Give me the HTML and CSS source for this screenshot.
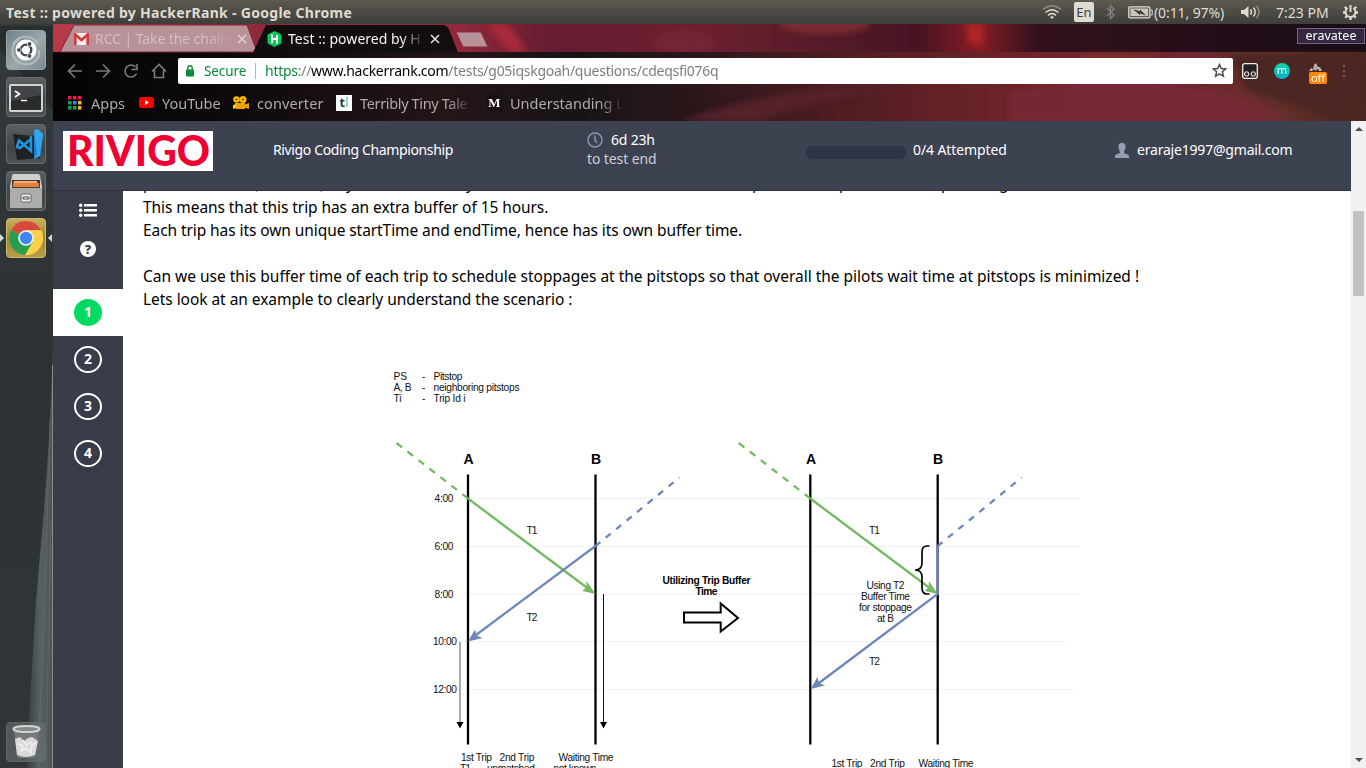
FILE: index.html
```html
<!DOCTYPE html>
<html lang="en">
<head>
<meta charset="utf-8">
<title>Test :: powered by HackerRank</title>
<link rel="stylesheet" href="styles.css">
</head>
<body>
<header class="panel">
  <span class="panel-title">Test :: powered by HackerRank - Google Chrome</span>
  <div class="indicators">
    <svg class="ind-wifi" width="20" height="16" viewBox="0 0 20 16" fill="none" stroke="#dfdbd2" stroke-width="1.5"><path d="M1 5.5Q10-2 19 5.5" stroke="#8d8b84"/><path d="M3.5 8.5Q10 3 16.500 8.500"/><path d="M6 11.300Q10 8 14 11.300"/><path d="M8 13l2 2 2-2q-2-1.500-4 0z" fill="#dfdbd2" stroke="none"/></svg>
    <span class="lang">En</span>
    <svg class="ind-bt" width="10" height="16" viewBox="0 0 10 16" fill="none" stroke="#85837c" stroke-width="1.300"><path d="M1 4l7 7-3.500 3.500V1.500L8 5l-7 7"/></svg>
    <svg class="ind-bat" width="25" height="13" viewBox="0 0 25 13"><rect x=".8" y=".8" width="21" height="11" rx="1" fill="#5d5b54" stroke="#dfdbd2" stroke-width="1.300"/><rect x="2.500" y="2.500" width="17.500" height="7.500" fill="#c8c5bd"/><path d="M22.500 4h1.700v5h-1.700" fill="none" stroke="#dfdbd2"/><path d="M5 3.500l7 1.500v-1.500l6 6-6-2v1.500z" fill="#3c3b37"/></svg>
    <span class="bat-text">(0:11, 97%)</span>
    <svg class="ind-vol" width="20" height="14" viewBox="0 0 20 14" fill="none" stroke="#dfdbd2" stroke-width="1.500"><path d="M0 5h3l4.500-4v12L3 9H0z" fill="#dfdbd2" stroke="none"/><path d="M9.500 4.500q2 2.500 0 5M12.500 2.500q3.500 4.500 0 9"/><path d="M15.500.8q5 6.200 0 12.400" stroke="#8d8b84"/></svg>
    <span class="clock">7:23 PM</span>
    <svg width="17" height="17" viewBox="0 0 17 17" fill="none" stroke="#dfdbd2"><path d="M5.500 4a5 5 0 1 0 6 0" stroke-width="2"/><path d="M8.500 1v7" stroke-width="2"/><path d="M1 8.500h2M14 8.500h2M2.800 2.800l1.700 1.700M14.200 2.800l-1.700 1.700M3.200 13.800l1.500-1.500M13.800 13.800l-1.500-1.500M8.500 13.500V16" stroke-width="2.300"/></svg>
  </div>
</header>
<div class="desktop">
  <nav class="launcher">
    <svg class="launcher-bg" width="53" height="744" viewBox="0 24 53 744"><defs><linearGradient id="beam" x1="0" x2="1"><stop offset="0" stop-color="#343c3f"/><stop offset=".5" stop-color="#566063"/><stop offset="1" stop-color="#4c5558"/></linearGradient></defs><path d="M0 50L53 110V26H0z" fill="#1d2122" opacity=".5"/><path d="M53 350L49 440L44 510L36 600L26 768H53z" fill="url(#beam)"/><path d="M50 420L46 560L38 768M51 520L46 768" fill="none" stroke="#6e787a" opacity=".45"/><path d="M52.500 365V768" stroke="#8c8b82"/></svg>
    <div class="tile tile-dash"><svg width="40" height="40" viewBox="0 0 40 40"><path d="M7 17C8 7 22 2 32 13M33 20c2 11-10 18-20 12M13 33C3 25 5 14 14 8" fill="none" stroke="#b1bcc0" stroke-width="2"/><circle cx="20" cy="20" r="10.500" fill="#fff"/><circle cx="20" cy="20" r="5.300" fill="none" stroke="#3b454a" stroke-width="2.300"/><g fill="#3b454a" stroke="#fff" stroke-width=".8"><circle cx="13" cy="20" r="2.300"/><circle cx="23.500" cy="14" r="2.300"/><circle cx="23.500" cy="26" r="2.300"/></g></svg></div>
    <div class="tile"><svg width="40" height="40" viewBox="0 0 40 40"><rect x="3" y="7" width="34" height="28" rx="2" fill="#d2d2cf"/><rect x="5" y="9" width="30" height="24" fill="#292a2c"/><path d="M5 9h30v9L5 24z" fill="#424447"/><path d="M9 14l4.500 3L9 20M15 23.500h6" fill="none" stroke="#fff" stroke-width="1.600"/></svg></div>
    <div class="tile"><svg width="40" height="40" viewBox="0 0 40 40"><path d="M7 10l21 2 6 22-23 2z" fill="#202122"/><path d="M28 6l9 5-3 21-6 3z" fill="#1783cf"/><path d="M28 6l4-1 5 5-3 22-6 3 3-5z" fill="#32a5ed"/><path d="M25 12v15L13 16.500 11 23l3 1 11-9" fill="none" stroke="#2196df" stroke-width="2.500"/></svg></div>
    <div class="tile"><svg width="40" height="40" viewBox="0 0 40 40"><path d="M6 5q0-2 2-2h24q2 0 2 2l2 11v19q0 2-2 2H6q-2 0-2-2V16z" fill="#cfcfcd"/><path d="M6 9h28v8H6z" fill="#4f3b2c"/><path d="M8 10h23v2H8z" fill="#f3b27d"/><path d="M7 12h26v4H7z" fill="#e1813d"/><path d="M4 17h32v18q0 2-2 2H6q-2 0-2-2z" fill="#adadac"/><rect x="15" y="23" width="10" height="8" rx="1.500" fill="#e9e9e7" stroke="#666"/><path d="M17 28v-2h6v2z" fill="none" stroke="#555"/></svg></div>
    <div class="tile tile-chrome"><svg width="40" height="40" viewBox="0 0 40 40"><circle cx="20" cy="20" r="17" fill="#f9c440"/><path d="M20 20L5 12A17 17 0 0 1 35 12z" fill="#d6493f"/><path d="M20 20L5 12A17 17 0 0 0 19 37L27 24z" fill="#2a9c50"/><path d="M20 12h15a17 17 0 0 1-16 25l8-13z" fill="#fcd04b"/><circle cx="20" cy="20" r="7.800" fill="#f4f4f2"/><circle cx="20" cy="20" r="6.200" fill="#4286f5"/></svg></div>
    <div class="tile tile-trash"><svg width="40" height="40" viewBox="0 0 40 40"><path d="M8 10l3 24q0 2 3 2h13q2 0 3-2l3-24z" fill="#737a7c"/><path d="M9 17l5-2 4 4 4-3 4-1 6 4-3 14q-9 4-18 0z" fill="#d9dad9"/><path d="M12 22l5 2-2 5 5-3 5 5 1-8 4-2M17 18l3 5 6-3" fill="none" stroke="#f0f0ef" stroke-width="1.500"/><ellipse cx="20.500" cy="7" rx="13" ry="3" fill="#81888a" stroke="#d4d3cf" stroke-width="2"/></svg></div>
  </nav>
  <div class="browser">
    <div class="chrome">
      <svg class="theme" width="1313" height="97" viewBox="53 24 1313 97" preserveAspectRatio="none">
        <defs>
          <linearGradient id="strip" gradientUnits="userSpaceOnUse" x1="53" x2="1366" y1="0" y2="0"><stop offset="0" stop-color="#b83a47"/><stop offset=".15" stop-color="#8f2a3d"/><stop offset=".31" stop-color="#90283a"/><stop offset=".38" stop-color="#651d31"/><stop offset=".49" stop-color="#6d2030"/><stop offset=".57" stop-color="#5a1c2a"/><stop offset=".66" stop-color="#471423"/><stop offset=".706" stop-color="#8a1c25"/><stop offset=".72" stop-color="#681a22"/><stop offset=".75" stop-color="#31101c"/><stop offset="1" stop-color="#180d16"/></linearGradient>
          <linearGradient id="bar" gradientUnits="userSpaceOnUse" x1="53" x2="1366" y1="0" y2="0"><stop offset="0" stop-color="#040304"/><stop offset=".14" stop-color="#0e0a0b"/><stop offset=".3" stop-color="#241517"/><stop offset=".4" stop-color="#171416"/><stop offset=".49" stop-color="#2b171a"/><stop offset=".6" stop-color="#501d22"/><stop offset=".72" stop-color="#6c2428"/><stop offset=".85" stop-color="#702530"/><stop offset=".93" stop-color="#66302b"/><stop offset="1" stop-color="#492820"/></linearGradient>
          <filter id="soft" x="-20%" y="-50%" width="140%" height="200%"><feGaussianBlur stdDeviation="3"/></filter>
        </defs>
        <path d="M53 24H1366V52H53z" fill="url(#strip)"/>
        <g filter="url(#soft)"><path d="M486 24h22l20 28h-18z" fill="#b72a3b" opacity=".8"/><ellipse cx="825" cy="24" rx="45" ry="10" fill="#883333" opacity=".7"/><ellipse cx="684" cy="42" rx="30" ry="12" fill="#7c2935" opacity=".6"/><path d="M965 24h18v20h-14z" fill="#c42928" opacity=".7"/></g>
        <path d="M53 52H1366V121H53z" fill="url(#bar)"/>
        <g filter="url(#soft)"><path d="M680 121Q770 90 860 86L900 90Q820 98 760 121z" fill="#54212a"/><path d="M1010 92Q1130 70 1245 98L1290 121H1010z" fill="#7c2b36" opacity=".7"/><path d="M1228 54L1246 90L1340 121L1366 90V54z" fill="#4b2820"/><path d="M1080 54h80l-20 12h-60z" fill="#87322a" opacity=".7"/></g>
        <path d="M60 52L74 25H247L257 52z" fill="#b79299" stroke="#7c2634"/>
        <path d="M253 52.500L266 25H442Q448 25 450 32L458 52.500z" fill="#120d0f"/>
        <path d="M456 32H481L488 47H463z" fill="#b79299" stroke="#862c3b"/>
      </svg>
      <div class="tabs">
        <div class="tab tab-mail">
          <svg width="15" height="12" viewBox="0 0 15 12"><path d="M0 0h15v12H0z" fill="#f3eded"/><path d="M1.300 12V1.500L7.500 7l6.200-5.500V12" fill="none" stroke="#d8383c" stroke-width="2.600"/></svg>
          <span class="tab-label dim">RCC | Take the challe</span>
          <svg class="tab-x" width="10" height="10" viewBox="0 0 10 10" stroke="#e1d3d5" stroke-width="1.500"><path d="M1 1l8 8M9 1L1 9"/></svg>
        </div>
        <div class="tab tab-live">
          <svg width="15" height="16" viewBox="0 0 15 16"><path d="M7.500 0l6 3 1 1v8l-1 1-6 3-6-3-1-1V4l1-1z" fill="#08c75a"/><path d="M5 3.500v8.500M10 4v8.500M5 8h5" stroke="#fff" stroke-width="2"/></svg>
          <span class="tab-label">Test :: powered by H</span>
          <svg class="tab-x" width="10" height="10" viewBox="0 0 10 10" stroke="#e8e6e6" stroke-width="1.500"><path d="M1 1l8 8M9 1L1 9"/></svg>
        </div>
        <span class="profile">eravatee</span>
      </div>
      <div class="toolbar">
        <div class="nav-icons">
          <svg width="16" height="16" viewBox="0 0 16 16"><path d="M15 8H2M8 1.500L1.500 8 8 14.500"/></svg>
          <svg width="16" height="16" viewBox="0 0 16 16"><path d="M1 8h13M8 1.500L14.500 8 8 14.500"/></svg>
          <svg width="16" height="16" viewBox="0 0 16 16"><path d="M13.500 10.500A6 6 0 1 1 12.500 4M14 1v5.500H8.500"/></svg>
          <svg width="16" height="16" viewBox="0 0 16 16"><path d="M1 8.500L8 1.500l7 7M3.500 7v7.500h9V7"/></svg>
        </div>
        <div class="omnibox">
          <svg width="10" height="12" viewBox="0 0 10 12"><rect x="1" y="4.500" width="8" height="7" rx=".8" fill="#0b8a3c"/><path d="M2.800 5V3a2.200 2.200 0 0 1 4.400 0v2" fill="none" stroke="#0b8a3c" stroke-width="1.400"/></svg>
          <span class="secure">Secure</span>
          <span class="url"><span class="green">https</span>://<span class="host">www.hackerrank.com</span>/tests/g05iqskgoah/questions/cdeqsfi076q</span>
          <svg class="star" width="15" height="15" viewBox="0 0 15 15"><path d="M7.500 1.500l1.800 4 4.400.4-3.300 2.900 1 4.400-3.900-2.300-3.900 2.300 1-4.400-3.300-2.900 4.400-.4z" fill="none" stroke="#4c4c4c" stroke-width="1.500"/></svg>
        </div>
        <div class="extensions">
          <svg width="16" height="16" viewBox="0 0 16 16"><rect x=".7" y=".7" width="14.600" height="14.600" rx="2" fill="#222" stroke="#f0eeee" stroke-width="1.300"/><g fill="#4b2020" stroke="#fff"><circle cx="4.700" cy="11" r="2.200"/><circle cx="11.300" cy="11" r="2.200"/></g></svg>
          <span class="ext-m">m</span>
          <span class="ext-off"><svg width="14" height="9" viewBox="0 0 14 9"><path d="M0 8l2-3 2 1 1-4 2-2 2 4 2 0 2 4z" fill="#b5afad"/><path d="M3 8l2-2 1 2 3-2 1 2z" fill="#4a1e20"/></svg><b>off</b></span>
          <svg width="4" height="14" viewBox="0 0 4 14" fill="#6b5351"><circle cx="2" cy="2" r="1.500"/><circle cx="2" cy="7" r="1.500"/><circle cx="2" cy="12" r="1.500"/></svg>
        </div>
      </div>
      <div class="bookmarks">
        <div class="bm bm-apps"><svg width="14" height="14" viewBox="0 0 14 14"><path d="M0 0h3.500v3.500H0zM5 0h3.500v3.500H5zM10 0h3.500v3.500H10z" fill="#eb1941"/><path d="M0 5h3.500v3.500H0zM0 10h3.500v3.500H0z" fill="#0ba65a"/><path d="M5 5h3.500v3.500H5z" fill="#3d7eef"/><path d="M5 10h3.500v3.500H5z" fill="#0ba65a"/><path d="M10 5h3.500v3.500H10zM10 10h3.500v3.500H10z" fill="#fcb713"/></svg><span>Apps</span></div>
        <div class="bm bm-yt"><svg width="15" height="11" viewBox="0 0 15 11"><rect width="15" height="11" rx="2.500" fill="#f00"/><path d="M6 3l4 2.500L6 8z" fill="#fff"/></svg><span>YouTube</span></div>
        <div class="bm bm-conv"><svg width="16" height="14" viewBox="0 0 16 14"><circle cx="3.500" cy="3.500" r="3.300" fill="#f8b900"/><circle cx="10" cy="3.500" r="3.500" fill="#f8b900"/><path d="M2 7h10v1.500l4-1.500v6l-4-1.500V13H3z" fill="#eea400"/><path d="M0 9l3-1v4l-3 1z" fill="#ffcc22"/><circle cx="3.500" cy="3.500" r="1" fill="#734700"/><circle cx="10" cy="3.500" r="1" fill="#734700"/></svg><span>converter</span></div>
        <div class="bm bm-ttt"><i class="ttt"><b>t</b><em>l</em></i><span>Terribly Tiny Tale</span></div>
        <div class="bm bm-med"><i class="med">M</i><span>Understanding L</span></div>
      </div>
    </div>
    <div class="viewport">
      <div class="page">
        <header class="test-header">
          <div class="logo"><svg width="150" height="40" viewBox="0 0 150 40"><text x="4" y="34.500" textLength="143" lengthAdjust="spacingAndGlyphs">RIVIGO</text></svg></div>
          <span class="test-name">Rivigo Coding Championship</span>
          <div class="timer"><div class="timer-row"><svg width="16" height="16" viewBox="0 0 16 16" fill="none" stroke="#8d94b0" stroke-width="1.500"><circle cx="8" cy="8" r="7"/><path d="M8 3.500V8l2 3"/></svg><span>6d 23h</span></div><div class="timer-sub">to test end</div></div>
          <div class="attempted"><i class="progress"></i><span>0/4 Attempted</span></div>
          <div class="user"><svg width="16" height="15" viewBox="0 0 16 15"><path d="M8 0c3 0 4 2 3.500 4.500C11 7 10 8 10 9.500c0 1.500 5 1 5 4V15H1v-1.500c0-3 5-2.500 5-4C6 8 5 7 4.500 4.500 4 2 5 0 8 0z" fill="#969cb1"/></svg><span>eraraje1997@gmail.com</span></div>
        </header>
        <div class="work">
          <aside class="sidebar">
            <svg class="side-list" width="18" height="14" viewBox="0 0 18 14" fill="#fff"><path d="M5 1h13v2.500H5zM5 6h13v2.500H5zM5 11h13v2.500H5z"/><circle cx="1.700" cy="2.200" r="1.700"/><circle cx="1.700" cy="7.200" r="1.700"/><circle cx="1.700" cy="12.200" r="1.700"/></svg>
            <span class="help">?</span>
            <div class="q q-on"><b>1</b></div>
            <div class="q"><b>2</b></div>
            <div class="q"><b>3</b></div>
            <div class="q"><b>4</b></div>
          </aside>
          <main class="content">
            <svg class="cut-line" width="900" height="23" viewBox="143 173 900 23"><text y="189" x="143 253 320 326 346 466 489 752 839 941 999">p(),yy,pppg</text></svg>
            <p class="l1">This means that this trip has an extra buffer of 15 hours.</p>
            <p class="l2">Each trip has its own unique startTime and endTime, hence has its own buffer time.</p>
            <p>&nbsp;</p>
            <p class="l3">Can we use this buffer time of each trip to schedule stoppages at the pitstops so that overall the pilots wait time at pitstops is minimized !</p>
            <p class="l4">Lets look at an example to clearly understand the scenario :</p>
            <svg class="diagram" width="710" height="420" viewBox="382 360 710 420">
              <defs>
                <g id="routes">
                  <path d="M396.500 443L468 498.500" stroke="#75b862" stroke-dasharray="7 6.900"/>
                  <path d="M468 498.500L590 590" stroke="#75b862"/>
                  <path d="M595.500 594l-13-3 4-4 0-6z" fill="#75b862" stroke="none"/>
                </g>
              </defs>
              <g stroke="#f3f3f3"><path d="M457 498.500H1080M457 546.500H1080M457 594H1080M457 641.500H1065M457 689.500H1073"/></g>
              <g stroke="#000" stroke-width="2.300"><path d="M468 474.500V744.500M595.500 474.500V744.500M810.300 474.500V744.500M937.700 474.500V744.500"/></g>
              <g fill="none" stroke-width="2.300"><use href="#routes"/><use href="#routes" x="342.300"/></g>
              <g stroke="#6e87b8" stroke-width="2.300" fill="none">
                <path d="M595.500 546L679.500 477.500M937.700 546L1021.700 477.500" stroke-dasharray="6.500 7" stroke-dashoffset=".3"/>
                <path d="M595.500 546L474 636.500M937.700 546V594L817 684.500"/>
                <path d="M468 641.500l7-12 1.500 6 6 2.500zM810.500 689l7-12 1.500 6 6 2.500z" fill="#6e87b8" stroke="none"/>
              </g>
              <path d="M460 642V724" stroke="#555"/><path d="M603.500 594V724" stroke="#111"/>
              <path d="M456.500 722h7l-3.500 6.500zM600 722h7l-3.500 6.500z"/>
              <path d="M684 612.500H720.700V603.500L738 618 720.700 631.500V622.500H684z" fill="none" stroke="#000" stroke-width="2"/>
              <path d="M929.500 546H927Q922 546 922 552V563Q922 570 915 570Q922 570 922 577V588Q922 594 927 594H929.500" fill="none" stroke="#000" stroke-width="1.700"/>
              <g class="dt">
                <text x="393.500" y="380">PS</text><text x="422" y="380">-</text><text x="433.500" y="380" textLength="29">Pitstop</text>
                <text x="393.500" y="391" textLength="18">A, B</text><text x="422" y="391">-</text><text x="433.500" y="391" textLength="86">neighboring pitstops</text>
                <text x="393.500" y="402">Ti</text><text x="422" y="402">-</text><text x="433.500" y="402" textLength="32">Trip Id i</text>
                <text x="434.500" y="502" textLength="19">4:00</text><text x="434.500" y="550" textLength="19">6:00</text><text x="434.500" y="597.500" textLength="19">8:00</text><text x="433" y="645" textLength="24">10:00</text><text x="433" y="693" textLength="24">12:00</text>
                <text x="526.500" y="534" textLength="11">T1</text><text x="526.500" y="621" textLength="11">T2</text><text x="869" y="534" textLength="11">T1</text><text x="869" y="665" textLength="11">T2</text>
                <text x="866.500" y="589" textLength="38">Using T2</text><text x="861" y="600" textLength="49">Buffer Time</text><text x="859" y="611" textLength="53">for stoppage</text><text x="877" y="622" textLength="17">at B</text>
                <text x="461" y="761" textLength="31">1st Trip</text><text x="499.500" y="761" textLength="35">2nd Trip</text><text x="558.500" y="761" textLength="55">Waiting Time</text>
                <text x="460" y="772" textLength="11">T1</text><text x="487" y="772" textLength="48">unmatched</text><text x="553.500" y="772" textLength="43">not known</text>
                <text x="831.500" y="767" textLength="31">1st Trip</text><text x="870" y="767" textLength="35">2nd Trip</text><text x="918.500" y="767" textLength="55">Waiting Time</text>
              </g>
              <g class="dt bold"><text x="662.500" y="584" textLength="88">Utilizing Trip Buffer</text><text x="695.500" y="595" textLength="22">Time</text></g>
              <g class="dt big"><text x="463.500" y="464">A</text><text x="591" y="464">B</text><text x="806" y="464">A</text><text x="933" y="464">B</text></g>
            </svg>
          </main>
        </div>
      </div>
      <div class="scrollbar"><i class="up"></i><i class="thumb"></i><i class="down"></i></div>
    </div>
  </div>
</div>
</body>
</html>
```
FILE: styles.css
```css
* { box-sizing: border-box; }
body { margin: 0; width: 1366px; height: 768px; overflow: hidden; font-family: "Noto Sans", "Open Sans", sans-serif; font-size: 14px; background: #fff; }
svg { display: block; flex: none; }
p { margin: 0; }
i, em { font-style: normal; }

.panel { height: 24px; display: flex; align-items: center; justify-content: space-between; padding: 0 7px 0 6px; color: #dfdbd2; background: linear-gradient(#5d5b50, #4e4c45 45%, #3f3e39); }
.panel-title { font-weight: 700; font-size: 14px; letter-spacing: .3px; white-space: nowrap; }
.indicators { display: flex; align-items: center; font-size: 14px; white-space: nowrap; }
.lang { width: 20px; height: 20px; margin: 0 12px; border-radius: 2px; background: #dfdbd2; color: #3e3d39; text-align: center; line-height: 21px; font-size: 13px; }
.ind-bat { margin: 0 1px 0 12px; }
.bat-text { width: 76px; letter-spacing: -.1px; }
.ind-vol { margin: 0 15px 0 11px; }
.clock { width: 56px; margin-right: 10px; letter-spacing: 0; }

.desktop { display: flex; height: 744px; }
.launcher { position: relative; width: 53px; padding: 6px; display: flex; flex-direction: column; gap: 7px; background: linear-gradient(#32393b, #2d3335 45%, #303537); }
.launcher-bg { position: absolute; left: 0; top: 0; }
.tile { position: relative; width: 40px; height: 40px; border-radius: 4px; background: linear-gradient(#5b6163, #3e4446 60%, #4e5557); border: 1px solid #676e70; }
.tile > svg { margin: -1px; }
.tile-dash { background: linear-gradient(135deg, #72838a, #9ca8ad 55%, #7b8a91); border-color: #99a5aa; }
.tile-chrome { background: linear-gradient(#caae5e, #9d8631 50%, #b89d49); border-color: #cdb66f; }
.tile-chrome::before, .tile-chrome::after { content: ""; position: absolute; top: 15px; border: 4px solid transparent; }
.tile-chrome::before { left: -7px; border-left-color: #d8d8d5; border-right: 0; }
.tile-chrome::after { right: -7px; border-right-color: #d8d8d5; border-left: 0; }
.tile-trash { margin-top: auto; background: rgba(105, 113, 116, .6); border-color: #5e6668; }

.browser { width: 1313px; display: flex; flex-direction: column; }
.chrome { position: relative; height: 97px; }
.theme { position: absolute; left: 0; top: 0; }
.tabs, .toolbar, .bookmarks { position: relative; display: flex; align-items: center; }
.tabs { height: 28px; padding: 1px 1px 0 21px; }
.tab { display: flex; align-items: center; width: 193px; }
.tab-label { width: 137px; margin-left: 6px; overflow: hidden; white-space: nowrap; color: #f4f3f3; font-size: 14px; letter-spacing: .03px; -webkit-mask-image: linear-gradient(90deg, #000 82%, transparent); mask-image: linear-gradient(90deg, #000 82%, transparent); }
.tab-label.dim { color: #d3bfc3; letter-spacing: -.08px; }
.tab-x { margin-left: 5px; }
.profile { margin: -6px 0 0 auto; width: 68px; height: 16px; border: 1px solid #736582; background: #352941; color: #fff; font-size: 12.5px; line-height: 14px; text-align: center; }
.toolbar { height: 37px; }
.nav-icons { display: flex; gap: 12px; width: 125px; padding-left: 14px; fill: none; stroke: #7c7c7d; stroke-width: 1.600; }
.omnibox { width: 1055px; height: 26px; padding: 0 6px 0 7px; display: flex; align-items: center; background: #fff; border-radius: 2px; }
.secure { color: #0b8a3c; width: 52px; margin-left: 9px; padding-right: 8px; border-right: 1px solid #b5b5b5; line-height: 16px; font-size: 13.500px; letter-spacing: -.1px; }
.url { margin-left: 9px; color: #7d7d7d; font-size: 14px; letter-spacing: -.27px; white-space: nowrap; }
.green { color: #0b8a3c; }
.host { color: #000; }
.star { margin-left: auto; }
.extensions { display: flex; align-items: center; margin-left: 9px; }
.ext-m { width: 16px; height: 16px; margin: 0 17px 0 16px; border-radius: 50%; background: linear-gradient(#0cd6a0, #07adc9); color: #fff; text-align: center; line-height: 14px; font-size: 11px; }
.ext-off { width: 20px; height: 22px; margin: 6px 13px 0 2px; display: flex; flex-direction: column; }
.ext-off b { width: 18px; height: 12px; border-radius: 2px; background: #ff8600; color: #fff; font-weight: 400; text-align: center; line-height: 11px; font-size: 11px; }
.bookmarks { height: 32px; padding: 0 0 5px 15px; color: #aeaaab; font-size: 14.500px; }
.bm { display: flex; align-items: center; white-space: nowrap; }
.bm-apps { width: 71px; gap: 9px; }
.bm-yt { width: 94px; gap: 8px; }
.bm-conv { width: 103px; gap: 8px; letter-spacing: .1px; }
.bm-ttt { width: 151px; gap: 8px; }
.bm-med { width: 140px; gap: 8px; }
.bm-ttt span { width: 113px; letter-spacing: -.35px; }
.bm-med span { width: 114px; }
.bm-ttt span, .bm-med span { -webkit-mask-image: linear-gradient(90deg, #000 78%, transparent); mask-image: linear-gradient(90deg, #000 78%, transparent); }
.ttt { width: 16px; height: 16px; background: #fff; color: #1c3342; text-align: center; line-height: 15px; font-size: 13px; }
.ttt em { color: #49b9ad; }
.med { width: 15px; height: 16px; background: #18110f; color: #fff; text-align: center; font: 700 13px/16px "Liberation Serif", serif; }

.viewport { display: flex; height: 647px; }
.page { width: 1298px; overflow: hidden; }
.test-header { height: 70px; display: flex; padding: 10px 0 0 10px; background: #3d4250; border-bottom: 1px solid #2d3144; color: #fff; font-size: 14px; }
.logo { width: 150px; height: 40px; background: #fff; }
.logo text { font: 900 41.500px Lato, sans-serif; fill: #f00032; }
.test-name { width: 374px; padding: 9px 0 0 60px; white-space: nowrap; letter-spacing: -.37px; }
.timer { width: 219px; margin-top: -1px; line-height: 19px; }
.timer-row { display: flex; align-items: center; gap: 8px; letter-spacing: -.2px; }
.timer-sub { color: #ccced6; letter-spacing: -.1px; }
.attempted { display: flex; gap: 7px; width: 308px; padding-top: 9px; white-space: nowrap; letter-spacing: -.1px; }
.progress { width: 100px; height: 13px; margin-top: 6px; border-radius: 5px; background: #303449; }
.user { display: flex; gap: 7px; padding-top: 9px; white-space: nowrap; letter-spacing: -.2px; }
.user svg { margin-top: 3px; }
.work { display: flex; height: 577px; }
.sidebar { width: 70px; display: flex; flex-direction: column; align-items: center; background: #383d49; }
.side-list { margin-top: 12px; }
.help { width: 16px; height: 16px; margin: 24px 0 32px; border-radius: 50%; background: #fff; color: #383d49; text-align: center; font-weight: 800; font-size: 13px; line-height: 16px; }
.q { width: 70px; height: 47px; display: flex; align-items: center; justify-content: center; }
.q b { width: 28px; height: 27px; border: 2px solid #fff; border-radius: 50%; color: #fff; font-size: 14px; line-height: 22px; text-align: center; }
.q-on { background: #fff; }
.q-on b { border-color: #00da61; background: #00da61; }
.content { width: 1228px; overflow: hidden; padding-left: 20px; font-size: 15.500px; line-height: 23px; color: #000; white-space: nowrap; background: #fff; }
.content p { height: 23px; }
.cut-line { margin-top: -18px; font-size: 15.500px; }
.l1 { letter-spacing: -.07px; }
.l2 { letter-spacing: -.08px; }
.l3 { letter-spacing: -.01px; }
.l4 { letter-spacing: -.05px; }
.diagram { margin: 49px 0 0 239px; }
.dt { font-family: "Liberation Sans", Arial, sans-serif; font-size: 10.200px; fill: #111; }
.bold { font-weight: 700; fill: #000; }
.big { font-size: 14px; font-weight: 700; fill: #000; }

.scrollbar { width: 15px; display: flex; flex-direction: column; align-items: center; background: #f1f1f1; }
.up, .down { border: 4px solid transparent; }
.up { margin-top: 6px; border-top: 0; border-bottom: 4px solid #505050; }
.thumb { width: 11px; height: 85px; margin-top: 80px; background: #c1c1c1; }
.down { margin: auto 0 6px; border-bottom: 0; border-top: 4px solid #505050; }
```
